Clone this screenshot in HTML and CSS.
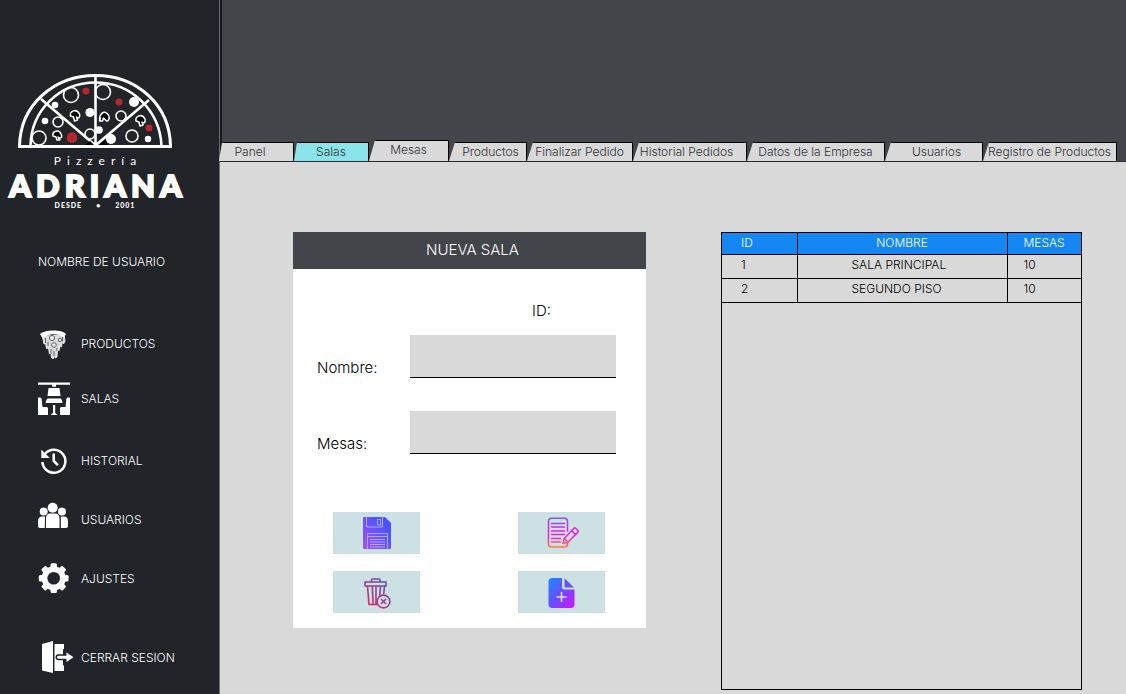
FILE: index.html
```html
<!DOCTYPE html>
<html lang="es">
<head>
<meta charset="utf-8">
<meta name="viewport" content="width=device-width, initial-scale=1">
<title>Pizzería Adriana - Salas</title>
<link rel="stylesheet" href="styles.css">
</head>
<body>
<div class="app">
  <aside class="sidebar">
    <div class="brand">
      <svg class="brand-pizza" width="156" height="76" viewBox="0 0 156 76" aria-hidden="true">
        <g fill="none" stroke="#fff" stroke-width="2.6">
          <path d="M2.500 73.500C3 32 37 2.500 78.500 2.500S153 32 153.500 73.500Z" stroke-width="3"/>
          <path d="M13.500 73C14 38 42 9.500 78.500 9.500S143 38 144.500 73"/>
          <path d="M78.500 2v71M24 26l54 46M132 27L79 72"/>
        </g>
        <g fill="none" stroke="#fff" stroke-width="1.600">
          <circle cx="54" cy="22" r="7.500"/><circle cx="86" cy="19" r="7.500"/><circle cx="41" cy="49" r="5"/>
          <circle cx="22" cy="65" r="7"/><circle cx="104" cy="43" r="5"/><circle cx="115" cy="63" r="6"/><circle cx="73" cy="61" r="5"/>
        </g>
        <g fill="#fff">
          <circle cx="38" cy="32" r="3.300"/><circle cx="28" cy="48" r="3.300"/><circle cx="73" cy="39.500" r="4.600"/>
          <circle cx="117" cy="29" r="5"/><circle cx="82" cy="57" r="3.800"/><circle cx="94" cy="66" r="5"/><circle cx="131" cy="66" r="3.200"/>
        </g>
        <g fill="#b3282d">
          <circle cx="69" cy="18" r="3.500"/><circle cx="102" cy="29" r="3.500"/><circle cx="132" cy="55" r="3.500"/><circle cx="55" cy="64.500" r="5.300"/>
        </g>
        <g fill="#000" stroke="#fff" stroke-width="1.500" stroke-linejoin="round">
          <path d="M53.500 43c-1-5 6-8 9-2 1 3-1 5-3 3l1 3-3 1-1-4z"/>
          <path d="M82.500 46c0-5 4-8 7-6 4 3 3 8 0 8l-3-3-1 3h-3l1-3z"/>
          <path d="M119 48c-1-5 6-8 9-2 1 3-1 5-3 3l1 3-3 1-1-4z"/>
          <path d="M36 63c-1-5 6-7 8-2 2 4-1 5-3 3l2 3h-3l-1-3z"/>
        </g>
        <path d="M68 72l5-4 4 4zM82 72l6-5 3 5z" fill="#000"/>
      </svg>
      <span class="brand-kind">Pizzería</span>
      <span class="brand-name">ADRIANA</span>
      <span class="brand-since"><span>DESDE</span><span>•</span><span>2001</span></span>
    </div>
    <p class="username">NOMBRE DE USUARIO</p>
    <ul class="menu">
      <li><a href="#productos">
        <svg class="menu-icon" viewBox="0 0 36 36" aria-hidden="true">
          <path d="M6 10l22-1 1 6-1.500 3-1.500-2-.5 5-1.500-1-1 5-1.500-2-.5 8-1.500 1-1-2-1 2.500-2-.5-.5-5-1.500 1-1-6-2 .5-1-5-1.500.5L7 13z" fill="#d8dadb" stroke="#fff" stroke-width=".8" stroke-linejoin="round"/>
          <path d="M4 8C8 3.500 26 3 30 8l-2 3.500C23 7 12 7 6.500 12z" fill="#fff"/>
          <g fill="#eee" stroke="#50545a" stroke-width=".9"><circle cx="16" cy="12" r="2.600"/><circle cx="18" cy="19" r="2.300"/><circle cx="24" cy="14" r="1.700"/><path d="M9.500 12v5M12 16v4M21 22v3M15 23v5M18 25v5M26.500 11v4" fill="none"/></g>
        </svg><span>PRODUCTOS</span></a></li>
      <li class="gap-s"><a href="#salas">
        <svg class="menu-icon" viewBox="0 0 36 36" aria-hidden="true">
          <path fill="#fff" d="M2 1.500h32v2.200H20v2h-4v-2H2zM12.500 7h11l1 8h-13zM12 17.500h12.500c1 0 1.500 2 2 4.500h-17c.5-2.500 1.500-4.500 2.500-4.500zM2 16.500h1.500c1.500 0 2 .5 2.200 2l.8 7.500H10c1.500 0 2 .5 2 2v6H2zM34 16.500h-1.500c-1.500 0-2 .5-2.200 2l-.8 7.500H26c-1.500 0-2 .5-2 2v6h10zM17 24h2.200v8l2.400 2h-7l2.400-2z"/>
        </svg><span>SALAS</span></a></li>
      <li class="gap-l"><a href="#historial">
        <svg class="menu-icon" viewBox="0 0 36 36" aria-hidden="true">
          <g fill="none" stroke="#fff" stroke-width="2.500"><path d="M9 11a11.500 11.500 0 1 1-2.600 8"/><path d="M17.700 11.500v6.500l3.600 3.500" stroke-linecap="round"/></g>
          <path fill="#fff" d="M5.300 6.500v8.500h8.500z"/>
        </svg><span>HISTORIAL</span></a></li>
      <li class="gap-m"><a href="#usuarios">
        <svg class="menu-icon" viewBox="0 0 36 36" aria-hidden="true">
          <g fill="#fff"><circle cx="16.700" cy="5.800" r="5"/><circle cx="7.700" cy="9.500" r="4"/><circle cx="26" cy="9.500" r="4"/>
          <path d="M10 26V17c0-4 2-5.500 4-5.500h5.500c2 0 4 1.500 4 5.500v9zM8.800 26H4c-1.300 0-2-.7-2-2v-4.500C2 16 3.500 14.500 6 14.500h3zM24.900 26H30c1.300 0 2-.7 2-2v-4.500c0-3.500-1.500-5-4-5h-3.200z"/></g>
        </svg><span>USUARIOS</span></a></li>
      <li class="gap-m"><a href="#ajustes">
        <svg class="menu-icon" viewBox="0 0 36 36" aria-hidden="true">
          <g fill="#fff"><g id="teeth"><rect x="14.500" y="2.300" width="6.400" height="29.800" rx="1.500"/><rect x="2.800" y="14" width="29.800" height="6.400" rx="1.500"/></g>
          <use href="#teeth" transform="rotate(45 17.700 17.200)"/><circle cx="17.700" cy="17.200" r="12"/></g>
          <circle cx="17.700" cy="17.200" r="6.300" fill="#212429"/>
        </svg><span>AJUSTES</span></a></li>
      <li class="gap-xl"><a href="#salir">
        <svg class="menu-icon" viewBox="0 0 36 36" aria-hidden="true">
          <path fill="#fff" d="M6 4l11-3v32L6 30.500zM18.500 4H28v27h-9.500z"/>
          <path d="M22.500 17.300H31M30 14.500v5.600l4-2.800z" fill="#fff" stroke="#212429" stroke-width="6" stroke-linecap="round"/>
          <path d="M22.500 17.300H31" stroke="#fff" stroke-width="3" stroke-linecap="round"/><path d="M30.500 12.500v9.600l7-4.800z" fill="#fff"/>
        </svg><span>CERRAR SESION</span></a></li>
    </ul>
  </aside>

  <div class="main">
    <header class="banner">
      <nav class="tabs">
        <a class="tab tab-first" href="#panel">Panel</a>
        <a class="tab tab-second is-active" href="#salas" aria-current="page">Salas</a>
        <a class="tab tab-tall" href="#mesas">Mesas</a>
        <a class="tab tab-indent" href="#productos">Productos</a>
        <a class="tab" href="#finalizar">Finalizar Pedido</a>
        <a class="tab tab-outdent" href="#historial">Historial Pedidos</a>
        <a class="tab" href="#datos">Datos de la Empresa</a>
        <a class="tab tab-indent" href="#usuarios">Usuarios</a>
        <a class="tab" href="#registro">Registro de Productos</a>
      </nav>
    </header>
    <main class="content">
      <form class="card">
        <h1 class="card-title">NUEVA SALA</h1>
        <div class="card-body">
          <p class="room-id">ID:</p>
          <div class="field"><label for="nombre">Nombre:</label><input id="nombre" type="text"></div>
          <div class="field"><label for="mesas">Mesas:</label><input id="mesas" type="text"></div>
          <div class="actions">
            <button type="button" aria-label="Guardar">
              <svg width="36" height="36" viewBox="0 0 36 36" aria-hidden="true">
                <defs><linearGradient id="save" x1="0" y1="1" x2="1" y2="0"><stop offset="0" stop-color="#a94bfb"/><stop offset=".6" stop-color="#5a55ff"/><stop offset="1" stop-color="#3f51fa"/></linearGradient></defs>
                <path d="M5.500 2H26l6 6v24.500c0 .8-.5 1.500-1.500 1.500h-25c-1 0-1.500-.7-1.500-1.500v-29C4 2.600 4.600 2 5.500 2z" fill="url(#save)"/>
                <g fill="none" stroke="#b7b3fa" stroke-width=".9"><path d="M7.500 2v10h16V2M18.500 4.500h3v5.500h-3zM8.500 34V18.500h20V34M8.500 21.500h20M11 24.500h15M11 27h15M11 29.500h15M11 32h15"/></g>
              </svg>
            </button>
            <button type="button" aria-label="Editar">
              <svg width="36" height="36" viewBox="0 0 36 36" aria-hidden="true">
                <defs><linearGradient id="edit" gradientUnits="userSpaceOnUse" x1="0" y1="3" x2="0" y2="33"><stop offset="0" stop-color="#7b62d2"/><stop offset=".4" stop-color="#e21cf0"/><stop offset=".65" stop-color="#ee28c0"/><stop offset="1" stop-color="#ff8040"/></linearGradient></defs>
                <g fill="none" stroke="url(#edit)" stroke-width="1.500" stroke-linejoin="round" stroke-linecap="round">
                  <path d="M23.500 16V6.500c0-2-1-3.300-3-3.300h-13c-2 0-3 1.300-3 3.300v22.300c0 2 1 3.300 3 3.300h13c2 0 3-1.300 3-3.300V27"/>
                  <path d="M7.500 8.500h13M7.500 12h13M7.500 16h13M7.500 19.500h13M7.500 23.500h9M7.500 27h9"/>
                  <path d="M19 28.500l1.200-5L30 13.300c.6-.6 1-.6 1.600 0l2.300 2.200c.6.600.6 1 0 1.600L24 27.200zM27.500 15.500l4 4M20.200 23.500l3.800 3.700"/>
                </g>
              </svg>
            </button>
            <button type="button" aria-label="Eliminar">
              <svg width="36" height="36" viewBox="0 0 36 36" aria-hidden="true">
                <defs><linearGradient id="trash" gradientUnits="userSpaceOnUse" x1="6" y1="31" x2="25" y2="8"><stop offset="0" stop-color="#f51b62"/><stop offset=".45" stop-color="#a33a85"/><stop offset="1" stop-color="#6750a5"/></linearGradient></defs>
                <g fill="none" stroke="url(#trash)" stroke-width="1.600" stroke-linejoin="round">
                  <path d="M12.500 8V6.300c0-.8.300-1.300 1.300-1.300h6c1 0 1.300.5 1.300 1.300V8M6 8h21v4H6zM8.500 12l1.500 18.500h9M25.500 12l-.8 8M13.300 12l.8 18M17 12v18M21.500 12l-.8 10"/>
                  <circle cx="24.500" cy="27.500" r="6.400"/><path d="M22 25l5 5M27 25l-5 5"/>
                </g>
              </svg>
            </button>
            <button type="button" aria-label="Agregar">
              <svg width="36" height="36" viewBox="0 0 36 36" aria-hidden="true">
                <defs><linearGradient id="add" x1="0" y1="0" x2="1" y2="1"><stop offset="0" stop-color="#168bff"/><stop offset=".5" stop-color="#6a4cff"/><stop offset="1" stop-color="#d713ff"/></linearGradient></defs>
                <path d="M8.500 4H18v9c0 1.500 1 2.500 2.500 2.500H30.500v15c0 2-1.500 3.500-3.500 3.500H8c-2 0-3.500-1.500-3.500-3.500v-23C4.500 5.500 6 4 8.500 4z" fill="url(#add)"/>
                <path d="M20.500 4.200L30 13.500h-8.500c-.7 0-1-.3-1-1z" fill="#6554f3"/>
                <path d="M17.500 18.500v9M13 23h9" stroke="#e6dcff" stroke-width="1.600" stroke-linecap="round"/>
              </svg>
            </button>
          </div>
        </div>
      </form>
      <section class="list" aria-label="Salas registradas">
        <table class="rooms">
          <thead><tr><th class="col-id">ID</th><th>NOMBRE</th><th class="col-tables">MESAS</th></tr></thead>
          <tbody>
            <tr><td>1</td><td class="room-name">SALA PRINCIPAL</td><td>10</td></tr>
            <tr><td>2</td><td class="room-name">SEGUNDO PISO</td><td>10</td></tr>
          </tbody>
        </table>
      </section>
    </main>
  </div>
</div>
</body>
</html>
```
FILE: styles.css
```css
* {
  box-sizing: border-box;
}

body {
  margin: 0;
  background: #d9d9d9;
  color: #000;
  font-family: Inter, "Liberation Sans", sans-serif;
  font-size: 12px;
  font-weight: 300;
  line-height: 16px;
}

a {
  color: inherit;
  text-decoration: none;
}

.app {
  display: grid;
  grid-template-columns: 220px 1fr;
  min-height: 100vh;
}

/* Sidebar */
.sidebar {
  padding-top: 73px;
  border-right: 1px solid #6d6e70;
  background: #212429;
  color: #fff;
}

.brand {
  display: flex;
  flex-direction: column;
  align-items: center;
  width: 190px;
  font-family: Lato, sans-serif;
}

.brand-pizza {
  display: block;
}

.brand-kind {
  margin-top: 4px;
  padding-left: 6px;
  font-size: 12px;
  font-weight: 400;
  line-height: 16px;
  letter-spacing: 6px;
}

.brand-name {
  padding-left: 6px;
  font-size: 31px;
  font-weight: 900;
  line-height: 32px;
  letter-spacing: 5px;
  -webkit-text-stroke: 2px #fff;
}

.brand-since {
  display: flex;
  gap: 14px;
  font-size: 7px;
  font-weight: 900;
  line-height: 8px;
  letter-spacing: 1px;
}

.username {
  margin: 45px 0 0 38px;
}

.menu {
  margin: 53px 0 0;
  padding: 0 0 12px 36px;
  list-style: none;
}

.menu a {
  display: flex;
  align-items: center;
  gap: 9px;
  height: 42px;
}

.menu-icon {
  flex: none;
  width: 36px;
  height: 36px;
  overflow: visible;
}

.gap-s {
  margin-top: 13px;
}

.gap-m {
  margin-top: 17px;
}

.gap-l {
  margin-top: 20px;
}

.gap-xl {
  margin-top: 37px;
}

/* Banner and tabs */
.main {
  display: flex;
  flex-direction: column;
  min-width: 0;
}

.banner {
  display: flex;
  align-items: flex-end;
  height: 162px;
  border-bottom: 1px solid #2b2d30;
  border-left: 2px solid #17181a;
  background: #424549;
}

.tabs {
  display: grid;
  flex: 1;
  grid-template-columns: 75fr 75fr 80fr 78fr 106fr 114fr 138fr 98fr 134fr;
  align-items: end;
  margin-left: -3px;
  padding-right: 9px;
}

.tab {
  height: 19px;
  border-top: 1px solid #000;
  border-right: 1px solid #000;
  background: #d9d9d9;
  clip-path: polygon(6px 0, 100% 0, 100% 100%, 0 100%);
  color: #303236;
  line-height: 18px;
  text-align: center;
  white-space: nowrap;
}

.tab-first {
  padding-right: 12px;
  clip-path: polygon(3px 0, 100% 0, 100% 100%, 0 100%);
}

.tab-second {
  clip-path: polygon(3px 0, 100% 0, 100% 100%, 0 100%);
}

.is-active {
  background: #8be4ea;
}

.tab-tall {
  height: 21px;
}

.tab-indent {
  padding-left: 6px;
}

.tab-outdent {
  padding-right: 6px;
}

/* Content */
.content {
  display: grid;
  flex: 1;
  grid-template-columns: 353fr 361fr;
  gap: 75px;
  padding: 70px 44px 4px 73px;
}

.card {
  align-self: start;
  background: #fff;
  font-size: 15px;
}

.card-title {
  margin: 0;
  padding: 8px 0 9px 6px;
  background: #424549;
  color: #fff;
  font-size: 15px;
  font-weight: 300;
  line-height: 20px;
  text-align: center;
}

.card-body {
  padding: 32px 30px 15px 24px;
}

.room-id {
  margin: 0 0 14px 215px;
  line-height: 20px;
}

.field {
  display: grid;
  grid-template-columns: 93px 1fr;
  align-items: end;
  margin-bottom: 33px;
}

.field label {
  line-height: 20px;
}

.field input {
  width: 100%;
  height: 43px;
  padding: 0 8px;
  border: 0;
  border-bottom: 1px solid #000;
  border-radius: 0;
  background: #d9d9d9;
  font: inherit;
}

.actions {
  display: grid;
  grid-template-columns: 87px 87px;
  justify-content: space-between;
  gap: 17px;
  margin-top: 58px;
  padding: 0 11px 0 16px;
}

.actions button {
  display: flex;
  align-items: center;
  justify-content: center;
  height: 42px;
  padding: 0;
  border: 0;
  background: #cde0e3;
}

.list {
  border: 1px solid #000;
}

.rooms {
  width: 100%;
  border-collapse: collapse;
  table-layout: fixed;
}

.rooms th,
.rooms td {
  height: 24px;
  padding: 0 0 0 16px;
  border: 1px solid #000;
  border-top: 0;
  font-weight: 300;
  text-align: left;
}

.rooms td {
  padding-bottom: 2px;
}

.rooms th {
  height: 21px;
  background: #1587f2;
  color: #fff;
  text-align: center;
}

.rooms th:nth-child(2) {
  padding: 0;
}

.rooms tr > :first-child {
  padding-left: 19px;
  border-left: 0;
  text-align: left;
}

.rooms tr > :last-child {
  border-right: 0;
  text-align: left;
}

.rooms .room-name {
  padding-left: 54px;
}

.col-id {
  width: 75px;
}

.col-tables {
  width: 74px;
}
```
